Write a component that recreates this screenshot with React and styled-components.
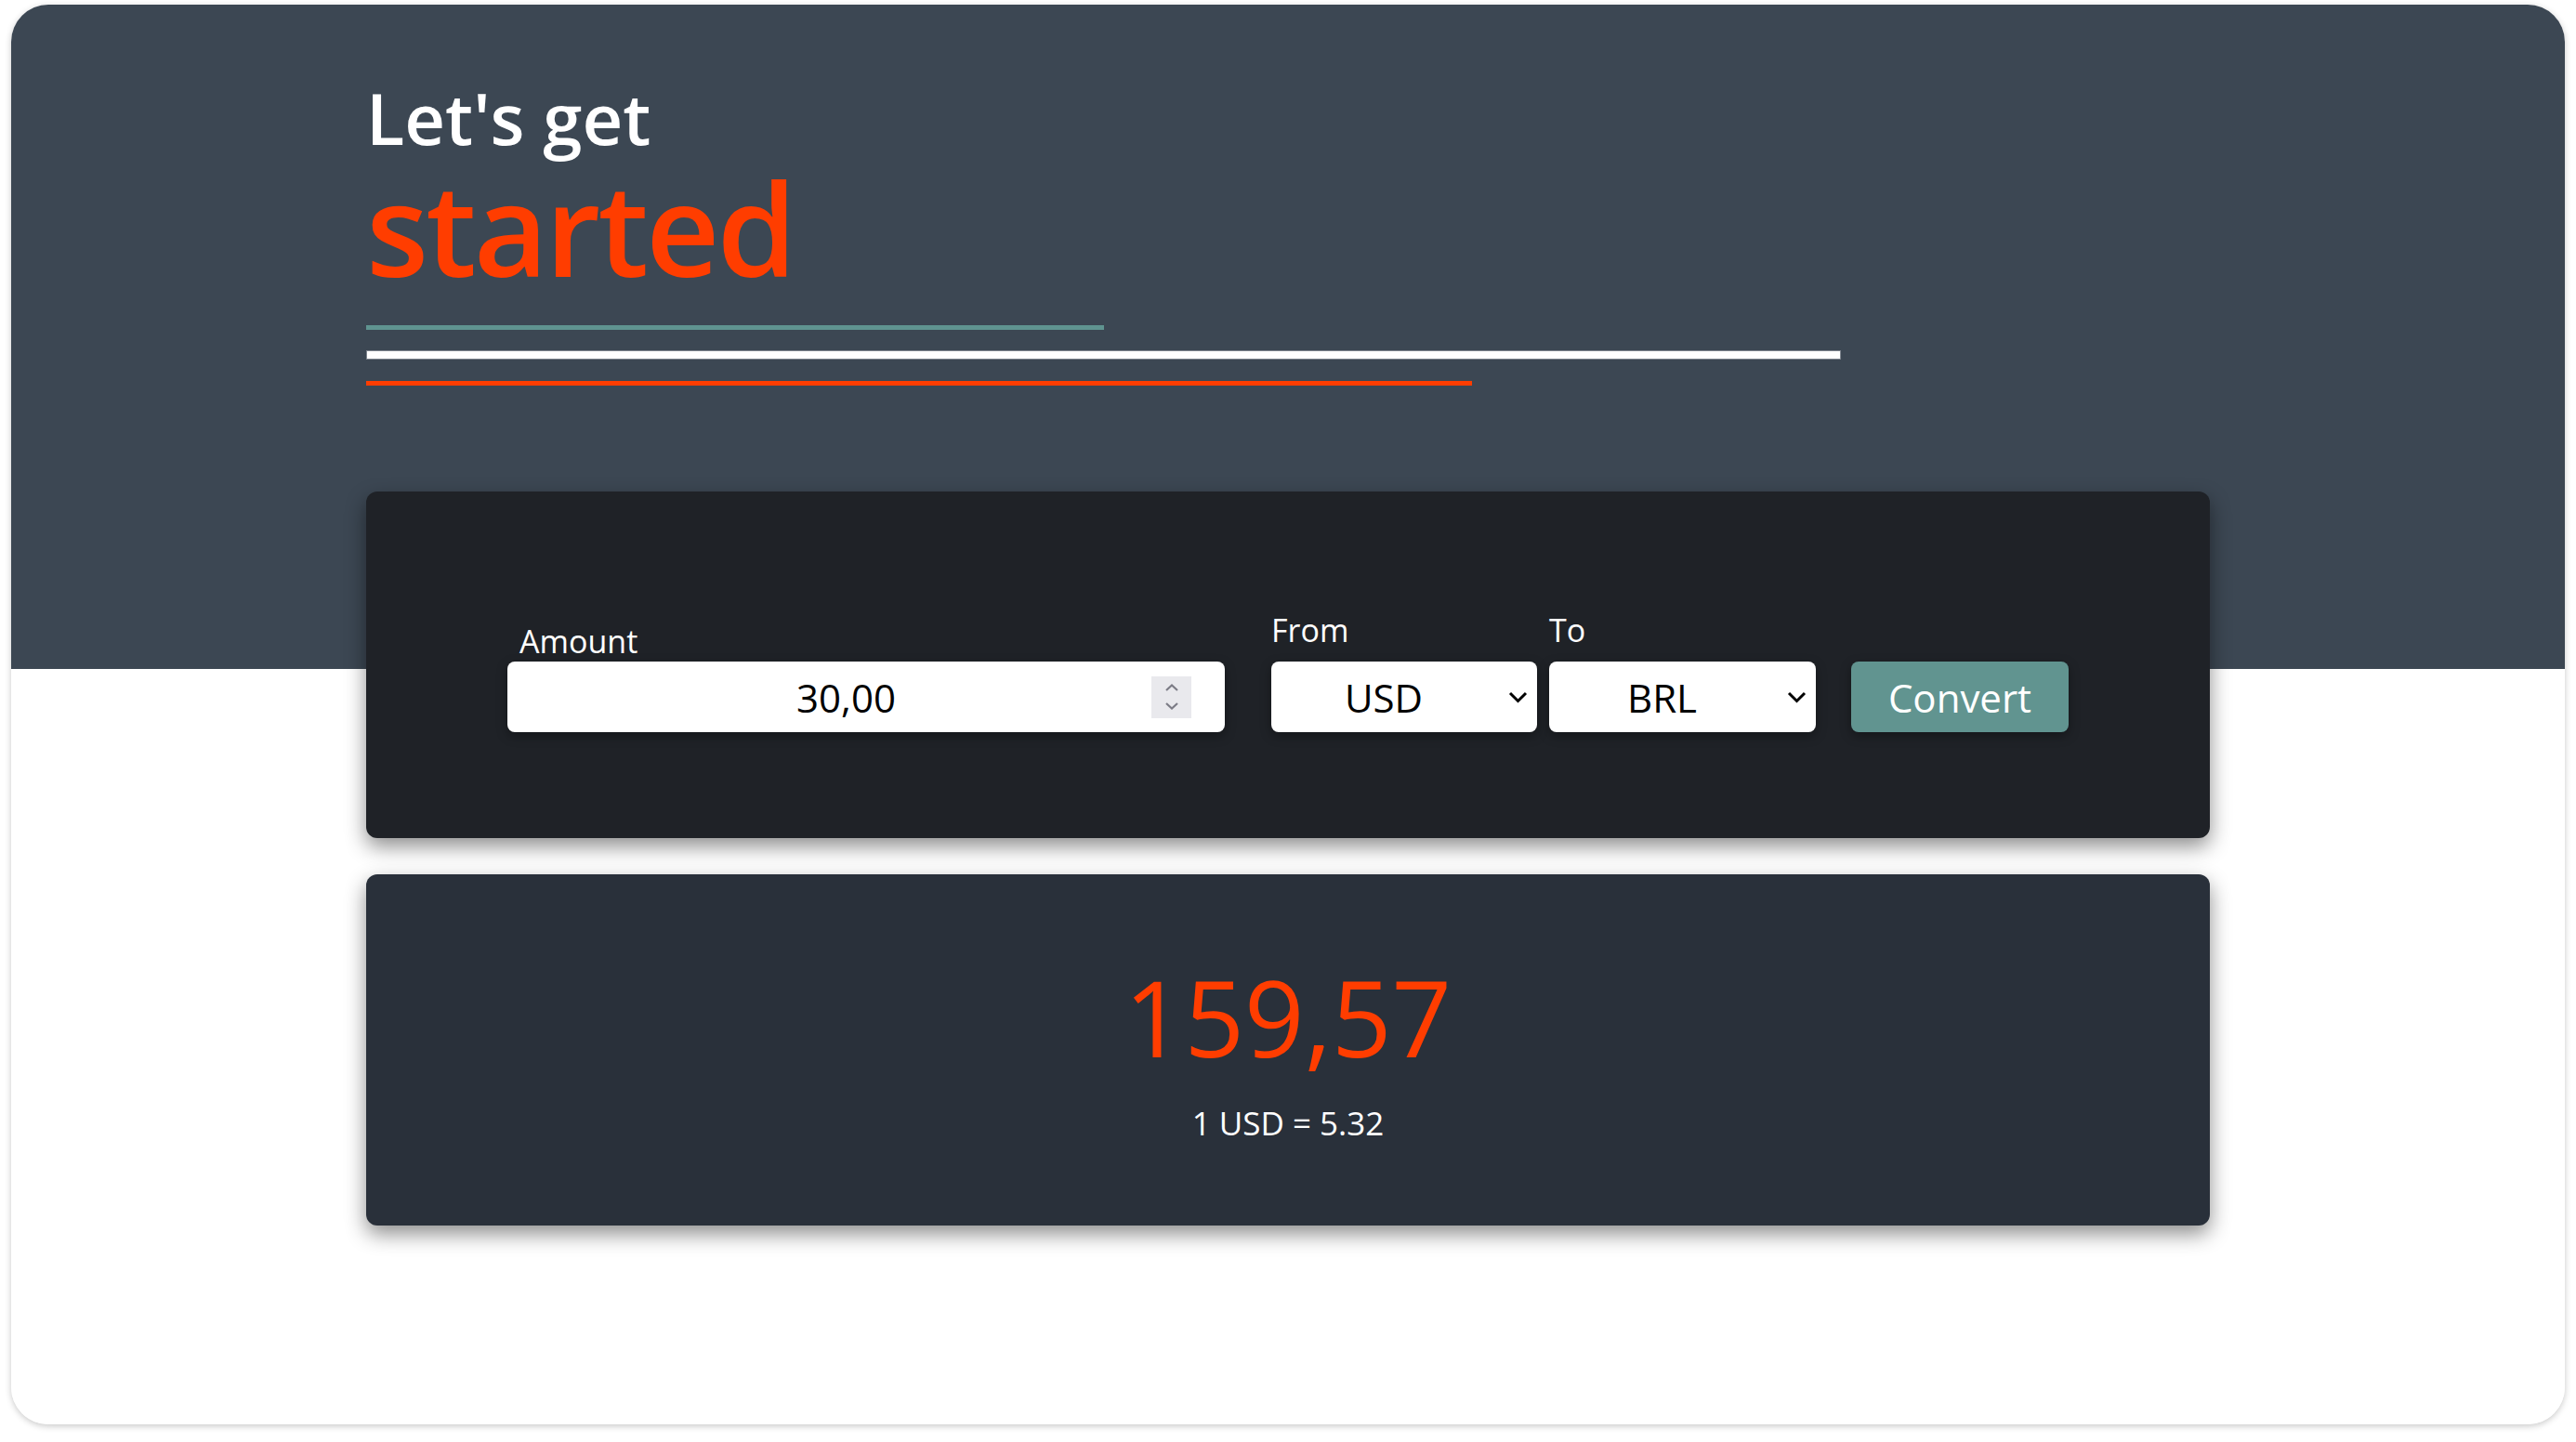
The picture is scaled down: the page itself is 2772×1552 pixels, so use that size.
import React from "react";
import styled, { createGlobalStyle } from "styled-components";

const GlobalStyle = createGlobalStyle`
  html, body {
    margin: 0;
    padding: 0;
    background: #ffffff;
  }
  body {
    font-family: "Open Sans", "Noto Sans", sans-serif;
  }
  * { box-sizing: border-box; }
`;

const Page = styled.div`
  padding: 5px 12px 19px 12px;
`;

const Frame = styled.main`
  border-radius: 40px;
  background: linear-gradient(to bottom, #3c4753 0, #3c4753 715px, #ffffff 715px);
  box-shadow: 0 2px 7px rgba(0, 0, 0, 0.22);
  padding: 83.5px 0 214px 0;
`;

const Content = styled.div`
  width: 1984px;
  margin: 0 auto;
`;

const Greeting = styled.h2`
  margin: 0;
  font-size: 76px;
  line-height: 76px;
  font-weight: 600;
  color: #ffffff;
`;

const Headline = styled.h1`
  margin: 10px 0 0 0;
  font-size: 138px;
  line-height: 138px;
  font-weight: 600;
  letter-spacing: -3px;
  color: #ff3d00;
`;

const Rules = styled.div`
  display: flex;
  flex-direction: column;
  margin-top: 37.5px;
`;

const Rule = styled.div`
  width: ${(p) => p.$w};
  height: ${(p) => p.$h}px;
  margin-top: ${(p) => p.$mt || 0}px;
  background: ${(p) => p.$color};
  border: ${(p) => (p.$border ? `1px solid ${p.$border}` : "none")};
`;

const Card = styled.section`
  background: ${(p) => p.$bg};
  border-radius: 12px;
  box-shadow: 0 9px 22px rgba(0, 0, 0, 0.45);
  margin-top: ${(p) => p.$mt}px;
  padding: ${(p) => p.$pad};
`;

const FormRow = styled.form`
  display: flex;
  justify-content: center;
  align-items: flex-end;
`;

const Field = styled.div`
  display: flex;
  flex-direction: column;
  margin-left: ${(p) => p.$ml || 0}px;
`;

const Label = styled.label`
  font-size: 34px;
  line-height: 34px;
  color: #ffffff;
  margin-bottom: ${(p) => p.$mb}px;
  padding-left: ${(p) => p.$pl || 0}px;
`;

const InputBox = styled.div`
  width: 772px;
  height: 76px;
  background: #ffffff;
  border-radius: 8px;
  padding: 0 36px;
  display: flex;
  align-items: center;
  box-shadow: 0 4px 12px rgba(0, 0, 0, 0.35);
`;

const AmountInput = styled.input`
  flex: 1;
  min-width: 0;
  border: 0;
  outline: none;
  background: transparent;
  font-family: "Open Sans", "Noto Sans", sans-serif;
  font-size: 42px;
  color: #000000;
  text-align: center;
  padding: 0;
`;

const Spinner = styled.div`
  width: 43px;
  height: 45px;
  background: #e9e9ed;
  display: flex;
  flex-direction: column;
  align-items: center;
  justify-content: center;
  gap: 12px;
`;

const SelectBox = styled.div`
  display: grid;
  width: ${(p) => p.$w}px;
  height: 76px;
  background: #ffffff;
  border-radius: 8px;
  box-shadow: 0 4px 12px rgba(0, 0, 0, 0.35);
  align-items: center;
`;

const Select = styled.select`
  grid-area: 1 / 1;
  appearance: none;
  -webkit-appearance: none;
  border: 0;
  outline: none;
  background: transparent;
  height: 100%;
  width: 100%;
  padding: 0 44px 0 0;
  font-family: "Open Sans", "Noto Sans", sans-serif;
  font-size: 42px;
  color: #000000;
  text-align: center;
  text-align-last: center;
`;

const Chevron = styled.svg`
  grid-area: 1 / 1;
  justify-self: end;
  margin-right: 10px;
  pointer-events: none;
`;

const ConvertButton = styled.button`
  margin-left: 38px;
  width: 234px;
  height: 76px;
  border: 0;
  border-radius: 8px;
  background: #619490;
  color: #ffffff;
  font-family: "Open Sans", "Noto Sans", sans-serif;
  font-size: 42px;
  box-shadow: 0 4px 12px rgba(0, 0, 0, 0.35);
  cursor: pointer;
`;

const ResultValue = styled.div`
  text-align: center;
  font-size: 113px;
  line-height: 113px;
  color: #ff3d00;
`;

const RateText = styled.div`
  text-align: center;
  margin-top: 40px;
  font-size: 35px;
  line-height: 35px;
  color: #ffffff;
`;

function SpinArrow({ up }) {
  return (
    <svg width="14" height="8" viewBox="0 0 14 8">
      <polyline
        points={up ? "1,7 7,1.5 13,7" : "1,1 7,6.5 13,1"}
        fill="none"
        stroke="#7c7c86"
        strokeWidth="2.2"
      />
    </svg>
  );
}

function CurrencySelect({ width, value, options }) {
  return (
    <SelectBox $w={width}>
      <Select defaultValue={value}>
        {options.map((o) => (
          <option key={o} value={o}>
            {o}
          </option>
        ))}
      </Select>
      <Chevron width="21" height="13" viewBox="0 0 21 13">
        <polyline points="2,2 10.5,10.5 19,2" fill="none" stroke="#000" strokeWidth="3" />
      </Chevron>
    </SelectBox>
  );
}

export default function App() {
  const currencies = ["USD", "BRL", "EUR", "GBP"];
  return (
    <>
      <GlobalStyle />
      <Page>
        <Frame>
          <Content>
            <Greeting>Let's get</Greeting>
            <Headline>started</Headline>
            <Rules>
              <Rule $w="40%" $h={5} $color="#5f9490" />
              <Rule $w="80%" $h={10} $mt={22} $color="#ffffff" $border="#7d848d" />
              <Rule $w="60%" $h={5} $mt={23} $color="#ff3d00" />
            </Rules>
            <Card $bg="#1f2227" $mt={114} $pad="132px 0 114px 0">
              <FormRow onSubmit={(e) => e.preventDefault()}>
                <Field>
                  <Label $mb={5} $pl={13}>Amount</Label>
                  <InputBox>
                    <AmountInput type="text" defaultValue="30,00" />
                    <Spinner>
                      <SpinArrow up />
                      <SpinArrow />
                    </Spinner>
                  </InputBox>
                </Field>
                <Field $ml={50}>
                  <Label $mb={17}>From</Label>
                  <CurrencySelect width={286} value="USD" options={currencies} />
                </Field>
                <Field $ml={13}>
                  <Label $mb={17}>To</Label>
                  <CurrencySelect width={287} value="BRL" options={currencies} />
                </Field>
                <ConvertButton type="submit">Convert</ConvertButton>
              </FormRow>
            </Card>
            <Card $bg="#29303a" $mt={39} $pad="97px 0 93px 0">
              <ResultValue>159,57</ResultValue>
              <RateText>1 USD = 5.32</RateText>
            </Card>
          </Content>
        </Frame>
      </Page>
    </>
  );
}
